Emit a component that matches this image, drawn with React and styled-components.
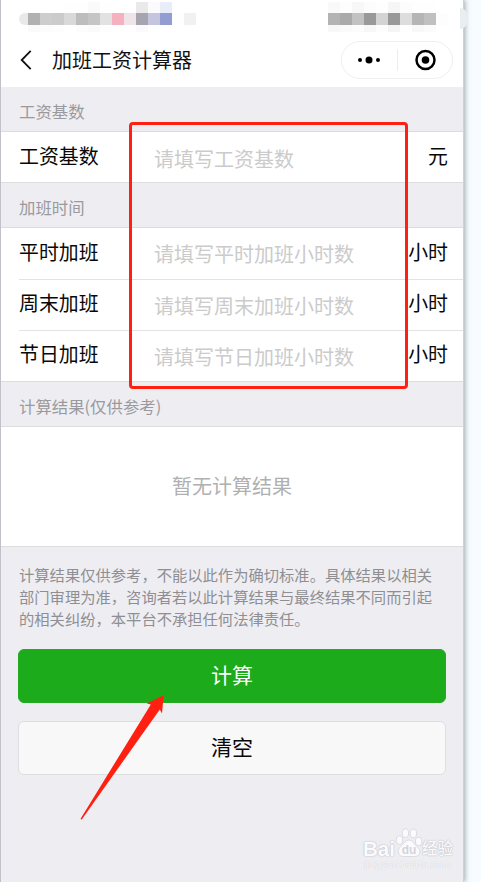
import { useState } from "react";
import styled, { createGlobalStyle } from "styled-components";

const GlobalStyle = createGlobalStyle`
  * {
    box-sizing: border-box;
  }

  body {
    margin: 0;
    background: #f6fcff;
    font-family: "Noto Sans CJK SC", "Noto Sans", sans-serif;
    overflow: hidden;
  }
`;

const Phone = styled.div`
  position: relative;
  width: 464px;
  height: 882px;
  background: #eeedf2;
  border-left: 1px solid #bfc2c8;
  border-right: 1px solid #cdd2d5;
  box-shadow: 1px 0 5px rgba(70, 85, 95, 0.5);
`;

const EdgeTab = styled.div`
  position: absolute;
  top: 8px;
  right: -4px;
  width: 7px;
  height: 21px;
  border-radius: 0 7px 7px 0;
  background: #e9eef1;
`;

const TopArea = styled.div`
  height: 87px;
  background: #fff;
`;

const StatusBar = styled.div`
  display: flex;
  justify-content: space-between;
  height: 33px;
  padding: 2px 15px 0 18px;
`;

const Mosaic = styled.div`
  display: flex;
`;

const MosaicColumn = styled.div`
  display: grid;
  grid-template-rows: 11px 12px 7px;
  width: ${({ $width }) => $width || 12}px;
`;

const Cell = styled.div`
  background: ${({ $color }) => $color};
  border-radius: ${({ $round }) => ($round ? "6px 0 0 6px" : 0)};
`;

const NavBar = styled.div`
  display: flex;
  align-items: center;
  height: 54px;
  padding: 0 10px 0 18px;
`;

const BackButton = styled.button`
  display: flex;
  width: 14px;
  padding: 0;
  border: none;
  background: none;
`;

const Title = styled.h1`
  flex: 1;
  margin: 0 0 0 19px;
  font-size: 20px;
  font-weight: 400;
  line-height: 30px;
  color: #111;
`;

const Capsule = styled.div`
  display: flex;
  align-items: center;
  width: 112px;
  height: 38px;
  border: 1px solid #f0f0f0;
  border-radius: 19px;
`;

const CapsuleButton = styled.button`
  display: flex;
  flex: 1;
  justify-content: center;
  padding: 0;
  border: none;
  background: none;
`;

const CapsuleDivider = styled.div`
  width: 1px;
  height: 22px;
  background: #ececec;
`;

const SectionTitle = styled.h2`
  height: 44px;
  margin: 0;
  padding: 12px 18px 0;
  font-size: 16.4px;
  font-weight: 400;
  line-height: 24px;
  color: #9a9a9e;
`;

const Group = styled.div`
  background: #fff;
  border-top: 1px solid #dddde0;
  border-bottom: 1px solid #dddde0;
`;

const Row = styled.label`
  display: flex;
  align-items: center;
  height: ${({ $height }) => $height}px;
  margin-left: 18px;
  padding: 0 15px ${({ $lift }) => $lift || 0}px 0;
  border-bottom: ${({ $last }) => ($last ? "none" : "1px solid #e3e3e3")};
  color: #080808;
  font-size: 19.9px;
  line-height: 30px;
`;

const RowLabel = styled.span`
  width: 135px;
  padding-bottom: 2px;
`;

const RowInput = styled.input`
  flex: 1;
  min-width: 0;
  height: 30px;
  padding: 2px 0 0;
  border: none;
  outline: none;
  background: none;
  font-family: inherit;
  font-size: 20px;

  &::placeholder {
    color: #cbcbcb;
    opacity: 1;
  }
`;

const Unit = styled.span`
  padding-bottom: 2px;
`;

const Result = styled.div`
  display: flex;
  align-items: center;
  justify-content: center;
  height: 119px;
  padding-bottom: 3px;
  font-size: 20px;
  color: #b0b0b0;
`;

const Notice = styled.p`
  margin: 16px 18px 0;
  font-size: 15.3px;
  line-height: 22px;
  color: #8f8f93;
  white-space: nowrap;
`;

const Actions = styled.div`
  display: flex;
  flex-direction: column;
  gap: 18px;
  margin: 20px 17px 0;
`;

const Button = styled.button`
  height: 54px;
  padding: 0 0 4px;
  border: 1px solid ${({ $primary }) => ($primary ? "#24ab22" : "#dedde2")};
  border-radius: 6px;
  background: ${({ $primary }) => ($primary ? "#1bab1b" : "#f8f8f8")};
  color: ${({ $primary }) => ($primary ? "#fff" : "#080808")};
  font-family: inherit;
  font-size: 21px;
`;

const Highlight = styled.div`
  position: absolute;
  top: 122px;
  left: 128px;
  width: 279px;
  height: 267px;
  border: 3px solid #ff2012;
  border-radius: 4px;
  pointer-events: none;
`;

const Arrow = styled.svg`
  position: absolute;
  top: 690px;
  left: 74px;
  pointer-events: none;
`;

const Watermark = styled.div`
  position: absolute;
  top: 826px;
  left: 362px;
  width: 92px;
  color: #fbfbfd;
  font-family: "Liberation Sans", "Noto Sans CJK SC", sans-serif;
  text-shadow: 0 0 1px #b4b4bb, 0 0 2px #c6c6cc;
`;

const WatermarkLogo = styled.div`
  display: flex;
  align-items: flex-end;
  height: 32px;
  font-size: 20.5px;
  font-weight: 700;
  line-height: 19px;
`;

const WatermarkCn = styled.span`
  margin-left: -1px;
  font-size: 15.5px;
  font-weight: 500;
  line-height: 19px;
`;

const WatermarkUrl = styled.div`
  padding-left: 1px;
  font-size: 10.8px;
  line-height: 12px;
  white-space: nowrap;
  color: #f8f8fb;
  text-shadow: 0 0 1px #c2c2c8;
`;

// Each column holds the top, middle and bottom cell colours.
const leftMosaic = [
  { width: 9, colors: ["#fff", "#e9e9e9", "#fff"], round: true },
  { colors: ["#fff", "#b1b1b1", "#fafafa"] },
  { colors: ["#fff", "#cdcdcd", "#fcfcfc"] },
  { colors: ["#fff", "#cbcbcb", "#fdfdfd"] },
  { colors: ["#fefefe", "#d9d9d9", "#fff"] },
  { colors: ["#fefefe", "#bdbdbd", "#fcfcfc"] },
  { colors: ["#fafafa", "#c5c5c5", "#fafafa"] },
  { colors: ["#fefefe", "#e2e2e2", "#fdfdfd"] },
  { colors: ["#fff", "#f6b1c1", "#fefefe"] },
  { colors: ["#fff", "#efe4e8", "#fefefe"] },
  { colors: ["#e9e9ea", "#a5a4af", "#fafafa"] },
  { colors: ["#fbfbfd", "#c4c6df", "#fefefe"] },
  { colors: ["#e9edf8", "#949dd2", "#fff"] },
  { colors: ["#fff", "#fefefe", "#fff"] },
  { colors: ["#fff", "#f1f1f1", "#fff"] },
];

const rightMosaic = [
  { colors: ["#f9f9f9", "#b3b3b3", "#f7f7f7"] },
  { colors: ["#fdfdfd", "#aaaaaa", "#fafafa"] },
  { colors: ["#f7f7f7", "#c2c2c2", "#fcfcfc"] },
  { colors: ["#fcfcfc", "#999999", "#f7f7f7"] },
  { colors: ["#fefefe", "#d4d4d4", "#fdfdfd"] },
  { colors: ["#f6f6f6", "#999999", "#f5f5f5"] },
  { colors: ["#fcfcfc", "#dddddd", "#fefefe"] },
  { colors: ["#fefefe", "#b5b5b5", "#f8f8f8"] },
  { colors: ["#fefefe", "#c0c0c0", "#fbfbfb"] },
  { colors: ["#fff", "#fdfdfd", "#fff"] },
];

const overtimeFields = [
  { key: "weekday", label: "平时加班", height: 52 },
  { key: "weekend", label: "周末加班", height: 51 },
  { key: "holiday", label: "节日加班", height: 50 },
];

function MosaicStrip({ columns }) {
  return (
    <Mosaic>
      {columns.map((column, index) => (
        <MosaicColumn key={index} $width={column.width}>
          {column.colors.map((color, row) => (
            <Cell key={row} $color={color} $round={column.round} />
          ))}
        </MosaicColumn>
      ))}
    </Mosaic>
  );
}

function Paw() {
  return (
    <svg width="28" height="31" viewBox="0 0 28 31">
      <g fill="#fbfbfd" stroke="#d3d3d9" strokeWidth="0.8">
        <ellipse cx="4.5" cy="13" rx="3.2" ry="4.2" />
        <ellipse cx="10.4" cy="6.2" rx="3.2" ry="4.4" />
        <ellipse cx="18.4" cy="6.4" rx="3.2" ry="4.4" />
        <ellipse cx="23.6" cy="14.4" rx="3.2" ry="4.2" />
        <path d="M14 13C10.5 13 9.3 16 6.8 18.5C4.3 20.8 2.6 22.8 3.5 26C4.4 30 8 29.5 14 29.5S23.8 30 24.7 26C25.5 22.8 23.2 20.7 20.8 18.5C18.3 16 17.5 13 14 13Z" />
      </g>
      <text
        x="14"
        y="27"
        textAnchor="middle"
        fontSize="12"
        fontWeight="700"
        fill="#d3d3d9"
        style={{ textShadow: "none" }}
      >
        du
      </text>
    </svg>
  );
}

export default function App() {
  const [values, setValues] = useState({});

  const update = (key) => (event) =>
    setValues({ ...values, [key]: event.target.value });

  return (
    <>
      <GlobalStyle />
      <Phone>
        <TopArea>
          <StatusBar>
            <MosaicStrip columns={leftMosaic} />
            <MosaicStrip columns={rightMosaic} />
          </StatusBar>
          <NavBar>
            <BackButton aria-label="返回">
              <svg width="14" height="22" viewBox="0 0 14 22">
                <path
                  d="M11.7 1.9L2.7 11L11.7 20.1"
                  fill="none"
                  stroke="#111"
                  strokeWidth="1.8"
                />
              </svg>
            </BackButton>
            <Title>加班工资计算器</Title>
            <Capsule>
              <CapsuleButton aria-label="更多">
                <svg width="24" height="10" viewBox="0 0 24 10">
                  <circle cx="3" cy="5" r="2" />
                  <circle cx="12" cy="5" r="3.5" />
                  <circle cx="21" cy="5" r="2" />
                </svg>
              </CapsuleButton>
              <CapsuleDivider />
              <CapsuleButton aria-label="关闭">
                <svg width="22" height="22" viewBox="0 0 22 22">
                  <circle
                    cx="11.5"
                    cy="11"
                    r="9"
                    fill="none"
                    stroke="#000"
                    strokeWidth="2.5"
                  />
                  <circle cx="11.5" cy="11" r="3.8" />
                </svg>
              </CapsuleButton>
            </Capsule>
          </NavBar>
        </TopArea>

        <SectionTitle>工资基数</SectionTitle>
        <Group>
          <Row $height={50} $last>
            <RowLabel>工资基数</RowLabel>
            <RowInput
              placeholder="请填写工资基数"
              value={values.base || ""}
              onChange={update("base")}
            />
            <Unit>元</Unit>
          </Row>
        </Group>

        <SectionTitle>加班时间</SectionTitle>
        <Group>
          {overtimeFields.map((field, index) => (
            <Row
              key={field.key}
              $height={field.height}
              $lift={2}
              $last={index === overtimeFields.length - 1}
            >
              <RowLabel>{field.label}</RowLabel>
              <RowInput
                placeholder={`请填写${field.label}小时数`}
                value={values[field.key] || ""}
                onChange={update(field.key)}
              />
              <Unit>小时</Unit>
            </Row>
          ))}
        </Group>

        <SectionTitle>计算结果(仅供参考)</SectionTitle>
        <Group>
          <Result>暂无计算结果</Result>
        </Group>

        <Notice>
          计算结果仅供参考，不能以此作为确切标准。具体结果以相关
          <br />
          部门审理为准，咨询者若以此计算结果与最终结果不同而引起
          <br />
          的相关纠纷，本平台不承担任何法律责任。
        </Notice>

        <Actions>
          <Button $primary>计算</Button>
          <Button onClick={() => setValues({})}>清空</Button>
        </Actions>

        <Watermark>
          <WatermarkLogo>
            <span>Bai</span>
            <Paw />
            <WatermarkCn>经验</WatermarkCn>
          </WatermarkLogo>
          <WatermarkUrl>jingyan.baidu.com</WatermarkUrl>
        </Watermark>

        <EdgeTab />
        <Highlight />
        <Arrow width="100" height="140" viewBox="75 690 100 140">
          <path
            d="M163.7 695.2L146.8 703.4L150.8 704.4L80.6 818.8L81.6 819.8L159.8 709.4L162 713.4Z"
            fill="#ff2012"
          />
        </Arrow>
      </Phone>
    </>
  );
}
